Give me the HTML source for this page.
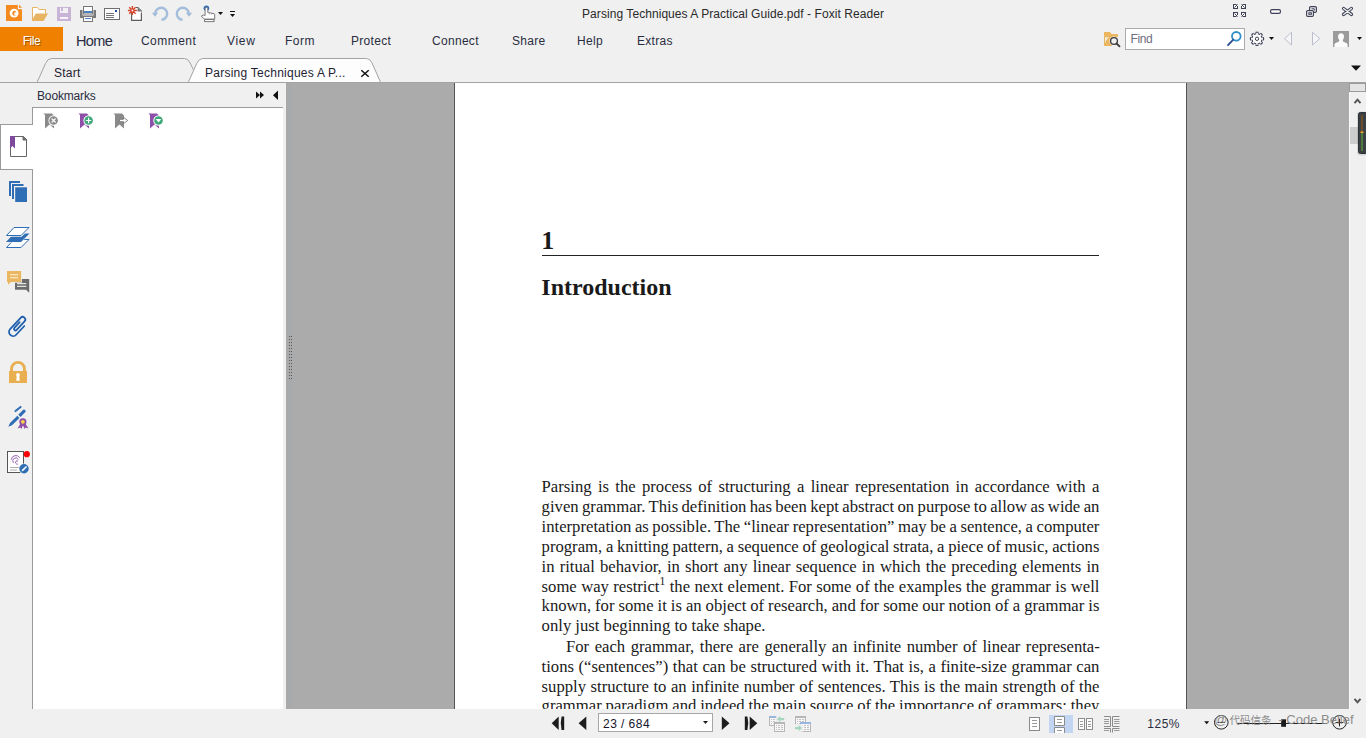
<!DOCTYPE html>
<html lang="en">
<head>
<meta charset="utf-8">
<title>Parsing Techniques A Practical Guide.pdf - Foxit Reader</title>
<style>
*{box-sizing:border-box;margin:0;padding:0}
html,body{width:1366px;height:738px;overflow:hidden;background:#f0f0f0}
body{position:relative;font-family:"Liberation Sans","Noto Sans CJK SC",sans-serif;font-size:12px;color:#1e1e2e}
.abs{position:absolute}
svg{position:absolute;overflow:visible}
/* title bar */
#title{position:absolute;left:0;top:5.600px;width:1466px;text-align:center;font-size:12px;line-height:16px;color:#2a2a2a;white-space:nowrap;letter-spacing:.06px}
/* menu */
#file{position:absolute;left:0;top:27px;width:63px;height:24px;background:#f08000;color:#fff;font-size:12px;line-height:29px;text-align:center;letter-spacing:-.4px;text-shadow:1px 1px 0 rgba(60,30,0,.45)}
.menu{position:absolute;top:33px;font-size:12px;line-height:16px;color:#2a2d40;white-space:nowrap;letter-spacing:.3px}
.menu.home{top:32px;font-size:14.5px;line-height:18px;letter-spacing:-.650px}
/* tabs */
#tabline{position:absolute;left:0;top:82px;width:1366px;height:1px;background:#a3a3a3}
.tabtxt{position:absolute;z-index:3;top:65px;font-size:12px;line-height:16px;color:#1e2233;white-space:nowrap;letter-spacing:.25px}
/* left panel */
#bmtitle{position:absolute;left:37px;top:88px;font-size:12px;line-height:16px;color:#2a2d40;letter-spacing:-.15px}
#panel{position:absolute;left:32px;top:107px;width:251px;height:602px;background:#fff;border-left:1px solid #9a9a9a;border-top:1px solid #9a9a9a}
#acttab{position:absolute;left:0;top:124px;width:33px;height:46px;background:#fff;border-top:1px solid #9a9a9a;border-bottom:1px solid #9a9a9a;border-left:1px solid #9a9a9a}
/* doc area */
#doc{position:absolute;left:286px;top:83px;width:1063px;height:626px;background:#ababab;overflow:hidden}
#docl{position:absolute;left:0;top:0;width:6px;height:626px;background:#a8a9aa}
#page{position:absolute;left:168px;top:0;width:733px;height:640px;background:#fff;border-left:1px solid #555;border-right:1px solid #555}
#page .t{position:absolute;left:86.600px;width:556.5px;font-family:"Liberation Serif",serif;font-size:16.67px;line-height:20px;color:#1a1a1a;white-space:nowrap}
#page .h{position:absolute;left:87px;font-family:"Liberation Serif",serif;font-weight:bold;font-size:24px;line-height:28px;color:#1a1a1a;white-space:nowrap}
#rule{position:absolute;left:87px;top:172px;width:557px;height:1px;background:#222}
sup.fn{font-size:11.670px;line-height:0;vertical-align:6.600px;position:relative}
/* scrollbar */
#vs{position:absolute;left:1349px;top:83px;width:17px;height:626px;background:#f0f0f0;border-left:1px solid #f9f9f9}
/* status */
#pgbox{position:absolute;left:598px;top:713px;width:115px;height:19px;background:#fff;border:1px solid #a6a6a6;font-size:12px;line-height:21px;padding-left:4px;color:#15152a;letter-spacing:.55px;word-spacing:-.3px}
#zoomtxt{position:absolute;left:1147.300px;top:716px;font-size:12px;line-height:16px;color:#2a2d40;letter-spacing:.5px}
#wm{position:absolute;z-index:3;left:1214.300px;top:711.500px;font-size:13px;line-height:16px;color:#858585;white-space:nowrap;opacity:.92}
#wm .cj{font-size:10.500px;margin-left:1.900px;margin-right:3.400px}
#find{position:absolute;left:1125px;top:28px;width:120px;height:22px;background:#fff;border:1px solid #ababab;font-size:12px;line-height:21px;padding-left:4.500px;color:#6d6d80;letter-spacing:-.4px}
</style>
</head>
<body>
<!-- TITLE BAR -->
<div id="title">Parsing Techniques A Practical Guide.pdf - Foxit Reader</div>

<!-- MENU -->
<div id="file">File</div>
<div class="menu home" style="left:76px">Home</div>
<div class="menu" style="left:141px;letter-spacing:.45px">Comment</div>
<div class="menu" style="left:227px;letter-spacing:.7px">View</div>
<div class="menu" style="left:285px;letter-spacing:.5px">Form</div>
<div class="menu" style="left:351px">Protect</div>
<div class="menu" style="left:432px">Connect</div>
<div class="menu" style="left:512px">Share</div>
<div class="menu" style="left:577px">Help</div>
<div class="menu" style="left:637px">Extras</div>
<div id="find">Find</div>


<!-- ICON OVERLAY: quick access toolbar -->
<svg id="qa" width="1366" height="58" style="left:0;top:0" viewBox="0 0 1366 58">
 <!-- foxit logo -->
 <path d="M6 5H17.800V9.200H22V21H6Z" fill="#f58a1f"/>
 <path d="M19 4.700L22 7.700H19Z" fill="#f58a1f"/>
 <circle cx="14.100" cy="13.100" r="4.450" fill="#fff"/>
 <ellipse cx="14.600" cy="13.300" rx="2.300" ry="2.500" fill="#f58a1f"/>
 <ellipse cx="15.800" cy="13.900" rx="1.700" ry="1.600" fill="#fff"/>
 <path d="M15 12.800L17.600 10.200L16.600 13Z" fill="#fff"/>
 <!-- open folder -->
 <path d="M32.5 7.5H37.5L39 9.5H45.5V13.5" fill="#fff" stroke="#e8b462" stroke-width="1"/>
 <path d="M32.5 7.5V20.5" stroke="#e8b462" stroke-width="1" fill="none"/>
 <path d="M33 8H37.3L38.8 10H45V14H36L33 19.5Z" fill="#fff"/>
 <path d="M35.8 13.5H48L43.6 21H32V20Z" fill="#e8b462"/>
 <!-- save -->
 <rect x="57" y="7" width="14" height="14" fill="#c8b4d6"/>
 <rect x="60" y="8" width="8" height="5" fill="#f2f0f3"/>
 <rect x="61" y="8" width="2" height="3" fill="#c8b4d6"/>
 <rect x="60" y="17" width="8" height="2" fill="#f6f4f7"/>
 <!-- printer -->
 <path d="M80 10H82.5V15.5H93.5V10H96V18H80Z" fill="#7a7a7a"/>
 <rect x="83.5" y="6.5" width="9" height="7.5" fill="#fff" stroke="#777" stroke-width="1"/>
 <rect x="84" y="11" width="8" height="2" fill="#4a80c2"/>
 <rect x="83.5" y="16.5" width="9" height="5" fill="#fff" stroke="#777" stroke-width="1"/>
 <rect x="85" y="18" width="6" height="1" fill="#4a80c2"/>
 <!-- mail -->
 <rect x="104.5" y="8.5" width="15" height="11" fill="#fff" stroke="#6e6e6e" stroke-width="1"/>
 <rect x="115" y="10" width="2" height="2" fill="#1e4fa0"/>
 <path d="M106 13.5H114M106 15.5H114M106 17.5H114" stroke="#777" stroke-width="1"/>
 <!-- new doc -->
 <path d="M131.600 13V20.400H141.400V11L137.800 7.600H136" fill="#fff" stroke="#606060" stroke-width="1.200"/>
 <path d="M131.5 13V8H137.800L141.500 11V13Z" fill="#fff"/>
 <path d="M137.500 7.500L141.500 11V11.500H137.500Z" fill="#777"/>
 <path d="M132.400 6V15M127.900 10.500H136.900M129.200 7.300L135.600 13.700M135.600 7.300L129.200 13.700" stroke="#d4442a" stroke-width="1.400"/>
 <circle cx="132.400" cy="10.500" r="0.900" fill="#fff"/>
 <!-- undo -->
 <path d="M155.200 13.500A6 6 0 1 1 161.500 19.800" fill="none" stroke="#a3bddb" stroke-width="2.400"/>
 <path d="M151.800 12.800H158.200L155 16.800Z" fill="#a3bddb"/>
 <!-- redo -->
 <path d="M188.800 13.500A6 6 0 1 0 182.500 19.800" fill="none" stroke="#a3bddb" stroke-width="2.400"/>
 <path d="M185.800 12.800H192.200L189 16.800Z" fill="#a3bddb"/>
 <!-- hand -->
 <circle cx="206.400" cy="8.200" r="2.800" fill="#2f6db5"/>
 <path d="M205.100 8.800V15.600L203.600 14.900L201.300 16.200L204.600 19.100H214.700V14.600Q214.700 13.500 213 13.500L212 13.300L210.500 12.900L209 12.800L207.800 12.600V8.800A1.350 1.350 0 0 0 205.100 8.800Z" fill="#fff" stroke="#777" stroke-width="1" stroke-linejoin="round"/>
 <path d="M209.500 13.200V14.600M211.500 13.500V14.800" stroke="#999" stroke-width="0.600"/>
 <rect x="204.600" y="19.500" width="9.400" height="2.100" fill="#fff" stroke="#777" stroke-width="1"/>
 <path d="M218 12H223L220.500 15Z" fill="#111"/>
 <rect x="230" y="11" width="5" height="1" fill="#111"/>
 <path d="M230 14H235L232.500 17Z" fill="#111"/>
 <!-- window controls -->
 <g fill="#fff" stroke="#3f4257" stroke-width="1">
  <rect x="1233.500" y="4.500" width="4" height="4"/><rect x="1241.500" y="4.500" width="4" height="4"/>
  <rect x="1233.500" y="12.500" width="4" height="4"/><rect x="1241.500" y="12.500" width="4" height="4"/>
 </g>
 <g fill="none" stroke="#f0f0f0" stroke-width="1.200">
  <path d="M1236.500 4.500H1238M1237.500 4V6M1241 4.500H1242.500M1241.500 4V6M1236.500 16.500H1238M1237.500 17V15M1241 16.500H1242.500M1241.500 17V15"/>
 </g>
 <g fill="none" stroke="#3f4257" stroke-width="1">
  <path d="M1234.500 7.500L1237.500 4.500M1244.500 7.500L1241.500 4.500M1234.500 13.500L1237.500 16.500M1244.500 13.500L1241.500 16.500"/>
  <rect x="1270.600" y="9.600" width="9.800" height="3.800" rx="1.300" fill="#fafafa" stroke-width="1.200"/>
  <path d="M1309.600 10V7.800A1.200 1.200 0 0 1 1310.800 6.600H1315.200A1.200 1.200 0 0 1 1316.400 7.800V11.100A1.200 1.200 0 0 1 1315.200 12.300H1314" stroke-width="1.200"/>
  <path d="M1311.500 8.800H1314.300V10.600"/>
  <rect x="1306.600" y="10.600" width="6.800" height="5.800" rx="1.200" fill="#fafafa" stroke-width="1.200"/>
  <rect x="1308.800" y="12.800" width="2.600" height="1.500"/>
 </g>
 <path d="M1343.600 8.500L1351.400 14.400M1351.400 8.500L1343.600 14.400" stroke="#3f4257" stroke-width="3.400" stroke-linecap="round"/>
 <path d="M1343.600 8.500L1351.400 14.400M1351.400 8.500L1343.600 14.400" stroke="#f6f6f6" stroke-width="1.300" stroke-linecap="round"/>
 <!-- folder search -->
 <path d="M1104 32H1110L1111.500 34H1118V37H1112V46H1104Z" fill="#eab65f"/>
 <path d="M1105 37.300H1109.500C1107.300 38 1106.300 40.500 1105 43.500Z" fill="#f4ead8"/>
 <circle cx="1114" cy="41" r="4.600" fill="#f0f0f0"/>
 <path d="M1116.300 43.300L1119.600 46.400" stroke="#f0f0f0" stroke-width="3.400" stroke-linecap="round"/>
 <circle cx="1114" cy="41" r="3.400" fill="#efefef" stroke="#3a3a3a" stroke-width="1.300"/>
 <path d="M1116.500 43.500L1119.500 46.300" stroke="#3a3a3a" stroke-width="1.800" stroke-linecap="round"/>
 <!-- find magnifier -->
 <circle cx="1236.300" cy="36.300" r="4.300" fill="#fff" stroke="#2f8fc7" stroke-width="1.800"/>
 <path d="M1233 39.800L1228 45.200" stroke="#2a4d8f" stroke-width="1.800" stroke-linecap="round"/>
 <!-- gear -->
 <g transform="translate(1257 38.800)">
  <path d="M6.90 0.00L6.80 0.36L6.53 0.69L6.13 0.97L5.67 1.20L5.22 1.40L4.84 1.57L4.59 1.76L4.50 2.00L4.54 2.31L4.68 2.70L4.86 3.16L5.02 3.65L5.11 4.13L5.06 4.56L4.88 4.88L4.56 5.06L4.13 5.11L3.65 5.02L3.16 4.86L2.70 4.68L2.31 4.54L2.00 4.50L1.76 4.59L1.57 4.84L1.40 5.22L1.20 5.67L0.97 6.13L0.69 6.53L0.36 6.80L0.00 6.90L-0.36 6.80L-0.69 6.53L-0.97 6.13L-1.20 5.67L-1.40 5.22L-1.57 4.84L-1.76 4.59L-2.00 4.50L-2.31 4.54L-2.70 4.68L-3.16 4.86L-3.65 5.02L-4.13 5.11L-4.56 5.06L-4.88 4.88L-5.06 4.56L-5.11 4.13L-5.02 3.65L-4.86 3.16L-4.68 2.70L-4.54 2.31L-4.50 2.00L-4.59 1.76L-4.84 1.57L-5.22 1.40L-5.67 1.20L-6.13 0.97L-6.53 0.69L-6.80 0.36L-6.90 0.00L-6.80 -0.36L-6.53 -0.69L-6.13 -0.97L-5.67 -1.20L-5.22 -1.40L-4.84 -1.57L-4.59 -1.76L-4.50 -2.00L-4.54 -2.31L-4.68 -2.70L-4.86 -3.16L-5.02 -3.65L-5.11 -4.13L-5.06 -4.56L-4.88 -4.88L-4.56 -5.06L-4.13 -5.11L-3.65 -5.02L-3.16 -4.86L-2.70 -4.68L-2.31 -4.54L-2.00 -4.50L-1.76 -4.59L-1.57 -4.84L-1.40 -5.22L-1.20 -5.67L-0.97 -6.13L-0.69 -6.53L-0.36 -6.80L-0.00 -6.90L0.36 -6.80L0.69 -6.53L0.97 -6.13L1.20 -5.67L1.40 -5.22L1.57 -4.84L1.76 -4.59L2.00 -4.50L2.31 -4.54L2.70 -4.68L3.16 -4.86L3.65 -5.02L4.13 -5.11L4.56 -5.06L4.88 -4.88L5.06 -4.56L5.11 -4.13L5.02 -3.65L4.86 -3.16L4.68 -2.70L4.54 -2.31L4.50 -2.00L4.59 -1.76L4.84 -1.57L5.22 -1.40L5.67 -1.20L6.13 -0.97L6.53 -0.69L6.80 -0.36Z" fill="#fff" stroke="#3f4257" stroke-width="0.500" stroke-opacity="0.550"/>
  <path d="M6.50 -1.15A6.6 6.6 0 0 1 6.50 1.15M5.41 3.79A6.6 6.6 0 0 1 3.79 5.41M1.15 6.50A6.6 6.6 0 0 1 -1.15 6.50M-3.79 5.41A6.6 6.6 0 0 1 -5.41 3.79M-6.50 1.15A6.6 6.6 0 0 1 -6.50 -1.15M-5.41 -3.79A6.6 6.6 0 0 1 -3.79 -5.41M-1.15 -6.50A6.6 6.6 0 0 1 1.15 -6.50M3.79 -5.41A6.6 6.6 0 0 1 5.41 -3.79M4.96 1.19A5.1 5.1 0 0 1 4.35 2.66M2.66 4.35A5.1 5.1 0 0 1 1.19 4.96M-1.19 4.96A5.1 5.1 0 0 1 -2.66 4.35M-4.35 2.66A5.1 5.1 0 0 1 -4.96 1.19M-4.96 -1.19A5.1 5.1 0 0 1 -4.35 -2.66M-2.66 -4.35A5.1 5.1 0 0 1 -1.19 -4.96M1.19 -4.96A5.1 5.1 0 0 1 2.66 -4.35M4.35 -2.66A5.1 5.1 0 0 1 4.96 -1.19" fill="none" stroke="#3f4257" stroke-width="1.100" stroke-linecap="round"/>
  <circle r="1.700" fill="#fff" stroke="#3f4257" stroke-width="1"/>
 </g>
 <path d="M1269 37H1274L1271.500 40Z" fill="#111"/>
 <path d="M1291.500 32.300V45L1284.500 38.600Z" fill="#f6f6f8" stroke="#b4b8ca" stroke-width="0.900" stroke-linejoin="round"/>
 <path d="M1312.500 32.300V45L1319.800 38.600Z" fill="#f6f6f8" stroke="#b4b8ca" stroke-width="0.900" stroke-linejoin="round"/>
 <!-- avatar -->
 <rect x="1333" y="31" width="16" height="16" fill="#9b9b9b"/>
 <path d="M1341 33.300C1343 33.300 1344 34.800 1344 36.600C1344 38.200 1343.300 39.300 1342.800 39.900V41.300C1343.500 42.300 1347.200 42.800 1347.600 44.500V47H1334.400V44.500C1334.800 42.800 1338.500 42.300 1339.200 41.300V39.900C1338.700 39.300 1338 38.200 1338 36.600C1338 34.800 1339 33.300 1341 33.300Z" fill="#fbfbfb"/>
 <path d="M1357 37H1362L1359.500 40Z" fill="#111"/>
</svg>

<!-- TABS -->
<div id="tabline"></div>
<div class="tabtxt" style="left:54px">Start</div>
<div class="tabtxt" style="left:205px">Parsing Techniques A P...</div>


<svg id="tabs" width="1366" height="30" style="left:0;top:56px" viewBox="0 56 1366 30">
 <!-- start tab -->
 <path d="M37 82.500L45.500 63.500Q47.500 58.500 51.500 58.500H184.500Q188 58.500 190.200 63L193.300 69.600" fill="none" stroke="#a3a3a3" stroke-width="1"/>
 <!-- active tab -->
 <path d="M188.200 82.500L196.700 63.500Q198.800 58.500 202.800 58.500H366.500Q370 58.500 372 63L380.700 82.500Z" fill="#fdfdfd" stroke="#a3a3a3" stroke-width="1"/>
 <path d="M361.300 70.300L368.700 76.700M368.700 70.300L361.300 76.700" stroke="#111" stroke-width="1.500"/>
 <path d="M1351 65.500H1361L1356 70.800Z" fill="#111"/>
</svg>

<!-- LEFT PANEL -->
<div id="bmtitle">Bookmarks</div>
<div id="panel"></div>
<div id="acttab"></div>


<svg id="lefticons" width="290" height="630" style="left:0;top:83px" viewBox="0 83 290 630">
 <!-- panel header arrows -->
 <path d="M256 91.500V98.500L260 95ZM260 91.500V98.500L264 95Z" fill="#111"/>
 <path d="M278 90.500V100L273 95.200Z" fill="#111"/>
 <!-- bookmark toolbar -->
 <g id="bm1">
  <path d="M43.500 113.500H52L54 115.500V128.500L49.500 124.500L45 128.500V115Z" fill="#8a8a8a"/>
  <circle cx="53.600" cy="120.500" r="5.200" fill="#fff"/>
  <circle cx="53.600" cy="120.500" r="4.300" fill="#8a8a8a"/>
  <path d="M51.600 118.500L55.600 122.500M55.600 118.500L51.600 122.500" stroke="#fff" stroke-width="1.100"/>
 </g>
 <g id="bm2">
  <path d="M78.500 113.500H87L89 115.500V128.500L84.500 124.500L80 128.500V115Z" fill="#8e4fa8"/>
  <circle cx="88.600" cy="120.500" r="5.200" fill="#fff"/>
  <circle cx="88.600" cy="120.500" r="4.300" fill="#3fa87a"/>
  <path d="M85.900 120.500H91.300M88.600 117.800V123.200" stroke="#fff" stroke-width="1.200"/>
 </g>
 <g id="bm3">
  <path d="M113.500 113.500H122L124 115.500V128.500L119.500 124.500L115 128.500V115Z" fill="#8a8a8a"/>
  <path d="M119.500 119.300H123.500V117.300L127.700 120.500L123.500 123.700V121.700H119.500Z" fill="#fff" stroke="#777" stroke-width="0.900" stroke-linejoin="round"/>
 </g>
 <g id="bm4">
  <path d="M148.500 113.500H157L159 115.500V128.500L154.500 124.500L150 128.500V115Z" fill="#8e4fa8"/>
  <circle cx="158.500" cy="120.500" r="5.200" fill="#fff"/>
  <circle cx="158.500" cy="120.500" r="4.300" fill="#3fa87a"/>
  <path d="M155.700 119H161.300L158.500 122.600Z" fill="#fff"/>
 </g>
 <!-- bookmark tab icon -->
 <path d="M10.500 136.500H23.500L26.500 139.500V156.500H10.500Z" fill="#fff" stroke="#666" stroke-width="1"/>
 <path d="M23 136.500V140H26.500Z" fill="#777" stroke="#666" stroke-width="1" stroke-linejoin="round"/>
 <path d="M10 136H15V148.500L12.500 146L10 148.500Z" fill="#7f4a9c"/>
 <!-- pages -->
 <rect x="9" y="181" width="11" height="15" fill="#2f6db5"/>
 <rect x="11" y="183" width="13" height="16" fill="#f0f0f0"/>
 <rect x="12" y="184" width="11.500" height="15" fill="#2f6db5"/>
 <rect x="14" y="186" width="13" height="16" fill="#f0f0f0"/>
 <rect x="15.200" y="187.300" width="11.800" height="14.700" fill="#2f6db5"/>
 <!-- layers -->
 <path d="M14 239.500H29L21 247.500H6.500Z" fill="#fff" stroke="#2f6db5" stroke-width="1" stroke-linejoin="round"/>
 <path d="M14 233.500H29.500L21 242H6Z" fill="#2f6db5" stroke="#f0f0f0" stroke-width="1.200"/>
 <path d="M14 233.500H29.500L21 242H6Z" fill="#2f6db5"/>
 <path d="M14 227.500H29L21 235.500H6.500Z" fill="#fff" stroke="#f0f0f0" stroke-width="2.600" stroke-linejoin="round"/>
 <path d="M14 227.500H29L21 235.500H6.500Z" fill="#fff" stroke="#2f6db5" stroke-width="1" stroke-linejoin="round"/>
 <!-- comments -->
 <path d="M15 279H29.200V292.800L26 289.700H15Z" fill="#6b6b6b"/>
 <path d="M17 283.600H26.300M17 286.400H26.300" stroke="#e4e4e4" stroke-width="1.100"/>
 <path d="M7 271H21.100V282H11L8 284.800V282H7Z" fill="#eab65f" stroke="#f0f0f0" stroke-width="1.600"/>
 <path d="M7 271H21.100V282H11L8 284.800V282H7Z" fill="#eab65f"/>
 <path d="M10 274.700H18.300M10 277.700H18.300" stroke="#fdf3dd" stroke-width="1.100"/>
 <!-- paperclip -->
 <g transform="translate(17.900 326.800) rotate(-47) scale(1.050)" fill="none" stroke="#1f5fae" stroke-width="1.650" stroke-linecap="round">
  <path d="M4.700 3.950L-6.650 3.950A3.950 3.950 0 0 1 -6.650 -3.950L8.050 -3.950A2.550 2.550 0 0 1 8.050 1.150L-3 1.150A1.450 1.450 0 0 1 -3 -1.750L4.400 -1.750"/>
 </g>
 <!-- lock -->
 <path d="M11.550 372V368.800A6.450 6.450 0 0 1 24.450 368.800V372" fill="none" stroke="#e8ae4f" stroke-width="2.900"/>
 <rect x="9" y="371" width="18" height="12" fill="#e8ae4f"/>
 <circle cx="18" cy="375" r="1.900" fill="#fff"/>
 <path d="M16.900 375.500H19.100L19.800 380.800H16.200Z" fill="#fff"/>
 <!-- pen & award -->
 <path d="M8.300 426.700L10 423L17.300 415.800L19.500 418L12 425.200Z" fill="#2f6db5"/>
 <path d="M18.300 414.800L23.200 409.800A1.600 1.600 0 0 1 25.400 412L20.500 417Z" fill="#2f6db5"/>
 <path d="M15.500 411.100L20.600 406.900" stroke="#2f6db5" stroke-width="2" stroke-linecap="round"/>
 <path d="M20.500 423.500L17.500 428.500L20.300 427.500L21.500 429L23 425L24.500 429L25.700 427.500L28.500 428.500L25.300 423.500Z" fill="#8e4fa8"/>
 <circle cx="22.900" cy="421.800" r="3.600" fill="#8e4fa8"/>
 <circle cx="22.900" cy="421.800" r="1.900" fill="#f6d44a"/>
 <!-- sign doc -->
 <rect x="7.500" y="451.500" width="16" height="21" fill="#fff" stroke="#555" stroke-width="1"/>
 <g fill="none" stroke="#8e4fa8" stroke-width="0.900" stroke-linecap="round">
  <path d="M11.300 459.300A4.600 4.600 0 0 1 19.600 457.500"/>
  <path d="M13.200 462.500A3 3 0 0 1 18.300 459.300"/>
  <path d="M17.500 464.200A1.800 1.800 0 0 1 16 461.200A1.300 1.300 0 0 1 17.600 461"/>
 </g>
 <path d="M10 467.500H19M10 470H17" stroke="#999" stroke-width="0.800"/>
 <circle cx="26.800" cy="454.200" r="3.100" fill="#f00"/>
 <circle cx="24" cy="468.800" r="5.300" fill="#f0f0f0"/>
 <circle cx="24" cy="468.800" r="4.700" fill="#2f6db5"/>
 <path d="M21.500 471.500L22.300 469.500L26 466L27 467L23.400 470.700Z" fill="#fff"/>
 </svg>

<!-- DOC -->
<div id="doc">
 <div id="docl"></div>
 <div id="page">
  <div class="h" style="top:143.500px;font-size:26px;left:86.300px">1</div>
  <div id="rule"></div>
  <div class="h" style="top:190px;left:86.300px">Introduction</div>
  <div class="t" style="top:394px;word-spacing:2.159px">Parsing is the process of structuring a linear representation in accordance with a</div>
  <div class="t" style="top:414px;word-spacing:-0.742px">given grammar. This definition has been kept abstract on purpose to allow as wide an</div>
  <div class="t" style="top:434px;word-spacing:-0.599px">interpretation as possible. The “linear representation” may be a sentence, a computer</div>
  <div class="t" style="top:454px;word-spacing:-0.462px">program, a knitting pattern, a sequence of geological strata, a piece of music, actions</div>
  <div class="t" style="top:474px;word-spacing:0.976px">in ritual behavior, in short any linear sequence in which the preceding elements in</div>
  <div class="t" style="top:494px;word-spacing:0.214px">some way restrict<sup class="fn">1</sup> the next element. For some of the examples the grammar is well</div>
  <div class="t" style="top:513px;word-spacing:-0.193px">known, for some it is an object of research, and for some our notion of a grammar is</div>
  <div class="t l" style="top:533px">only just beginning to take shape.</div>
  <div class="t" style="top:554px;left:111px;width:533px;word-spacing:1.335px">For each grammar, there are generally an infinite number of linear representa-</div>
  <div class="t" style="top:574px;word-spacing:0.416px">tions (“sentences”) that can be structured with it. That is, a finite-size grammar can</div>
  <div class="t" style="top:594px;word-spacing:0.380px">supply structure to an infinite number of sentences. This is the main strength of the</div>
  <div class="t" style="top:613px;word-spacing:-0.307px">grammar paradigm and indeed the main source of the importance of grammars: they</div>
 </div>
</div>
<svg id="dots" width="6" height="50" style="left:288px;top:334px;z-index:4" viewBox="288 334 6 50">
<!-- splitter dots -->
 <g fill="#5a5a5a">
  <path d="M289 336h1v1h-1zM291 336h1v1h-1zM289 339h1v1h-1zM291 339h1v1h-1zM289 342h1v1h-1zM291 342h1v1h-1zM289 345h1v1h-1zM291 345h1v1h-1zM289 348h1v1h-1zM291 348h1v1h-1zM289 351h1v1h-1zM291 351h1v1h-1zM289 354h1v1h-1zM291 354h1v1h-1zM289 357h1v1h-1zM291 357h1v1h-1zM289 360h1v1h-1zM291 360h1v1h-1zM289 363h1v1h-1zM291 363h1v1h-1zM289 366h1v1h-1zM291 366h1v1h-1zM289 369h1v1h-1zM291 369h1v1h-1zM289 372h1v1h-1zM291 372h1v1h-1zM289 375h1v1h-1zM291 375h1v1h-1zM289 378h1v1h-1zM291 378h1v1h-1z"/>
 </g>
</svg>
<div id="vs"></div>
<svg id="vsicons" width="17" height="626" style="left:1349px;top:83px" viewBox="1349 83 17 626">
 <rect x="1349.500" y="83.500" width="16" height="8" fill="#e4e4e4" stroke="#9a9a9a"/>
 <path d="M1354.500 103.200L1357.500 99.700L1360.500 103.200" fill="none" stroke="#555" stroke-width="2"/>
 <rect x="1350" y="127" width="15" height="17" fill="#cdcdcd"/>
 <rect x="1357" y="111.500" width="10" height="44" rx="3" fill="#000" opacity="0.100"/>
 <rect x="1358.500" y="112.500" width="9" height="41" rx="2" fill="#3b4045" stroke="#2c3034"/>
 <rect x="1361" y="115" width="2" height="17" fill="#6b4e2a"/>
 <rect x="1361" y="133" width="2" height="18" fill="#4f7a3a"/>
 <rect x="1360.500" y="131.500" width="3" height="1.500" fill="#f5a623"/>
 <path d="M1354.500 698.800L1357.500 702.300L1360.500 698.800" fill="none" stroke="#555" stroke-width="2"/>
</svg>


<!-- STATUS BAR -->
<svg id="status" width="1366" height="29" style="left:0;top:709px;z-index:2" viewBox="0 709 1366 29">
 <!-- nav -->
 <g fill="#1c1c1c">
  <path d="M558.700 716.500V730L551.700 723.200Z"/>
  <path d="M561.600 716.500H564.200V730H561.600Q559.800 723.200 561.600 716.500Z"/>
  <path d="M586.300 716.500V730L578.600 723.200Z"/>
  <path d="M721.800 716.500V730L729.500 723.200Z"/>
  <path d="M747.400 716.500H744.800V730H747.400Q749.200 723.200 747.400 716.500Z"/>
  <path d="M749.700 716.500V730L757.300 723.200Z"/>
  <path d="M703 721H708L705.500 724Z"/>
 </g>
 <!-- page layout transition icons (disabled) -->
 <g>
  <rect x="769.500" y="716.500" width="10" height="9" fill="#f6f6f6" stroke="#b6b6b6"/>
  <rect x="769" y="716" width="11" height="2" fill="#9bb6dd"/>
  <path d="M771 719.5h1M773 719.5h2M776 719.5h2M771 721.5h1M773 721.5h2M776 721.5h2M771 723.5h1M773 723.5h2M776 723.5h2" stroke="#c2c2c2" stroke-width="1"/>
  <rect x="776.300" y="715" width="9" height="7.500" fill="#f0f0f0"/>
  <path d="M784.200 718H780.300V716L777 719.100L780.300 722.200V720.200H784.200Z" fill="#a4d6bd"/>
  <rect x="774.500" y="722.500" width="10" height="9" fill="#f6f6f6" stroke="#b6b6b6"/>
  <rect x="774" y="722" width="11" height="2" fill="#b6b6b6"/>
  <path d="M776 725.5h1M778 725.5h2M781 725.5h2M776 727.5h1M778 727.5h2M781 727.5h2M776 729.5h1M778 729.5h2M781 729.5h2" stroke="#c2c2c2" stroke-width="1"/>
 </g>
 <g>
  <rect x="795.500" y="716.500" width="10" height="9" fill="#f6f6f6" stroke="#b6b6b6"/>
  <rect x="795" y="716" width="11" height="2" fill="#b6b6b6"/>
  <path d="M797 719.5h1M799 719.5h2M802 719.5h2M797 721.5h1M799 721.5h2M802 721.5h2M797 723.5h1M799 723.5h2M802 723.5h2" stroke="#c2c2c2" stroke-width="1"/>
  <rect x="800.500" y="722.500" width="10" height="9" fill="#f6f6f6" stroke="#b6b6b6"/>
  <rect x="800" y="722" width="11" height="2" fill="#9bb6dd"/>
  <path d="M802 725.5h1M804 725.5h2M807 725.5h2M802 727.5h1M804 727.5h2M807 727.5h2M802 729.5h1M804 729.5h2M807 729.5h2" stroke="#c2c2c2" stroke-width="1"/>
  <rect x="794.500" y="724.300" width="8.300" height="7.500" fill="#f0f0f0"/>
  <path d="M795 727H798.700V725L802 728.100L798.700 731.200V729.200H795Z" fill="#a4d6bd"/>
 </g>
 <!-- view mode icons -->
 <rect x="1029.500" y="717.500" width="10" height="13" fill="#fff" stroke="#8a8a8a"/>
 <path d="M1032 720.500H1037M1032 723.500H1037M1032 726.500H1037" stroke="#9a9a9a" stroke-width="1"/>
 <rect x="1049" y="715" width="24" height="18" fill="#c2d5f2"/>
 <path d="M1054.500 725.500V716.500H1064.500V725.500Z" fill="#fff" stroke="#8a8a8a"/>
 <path d="M1057 719.500H1062M1057 722.500H1062" stroke="#9a9a9a" stroke-width="1"/>
 <path d="M1054.500 733V727.500H1064.500V733" fill="#fff" stroke="#8a8a8a"/>
 <path d="M1057 730.500H1062" stroke="#9a9a9a" stroke-width="1"/>
 <rect x="1078.500" y="718.500" width="6" height="11" fill="#fff" stroke="#8a8a8a"/>
 <rect x="1086.500" y="718.500" width="6" height="11" fill="#fff" stroke="#8a8a8a"/>
 <path d="M1080 721.500H1083M1080 724.500H1083M1080 726.500H1083M1088 721.500H1091M1088 724.500H1091M1088 726.500H1091" stroke="#9a9a9a" stroke-width="1"/>
 <path d="M1104 716.500H1110.500V726.500H1104M1119.500 716.500H1112.500V726.500H1119.500M1104 728.500H1110.500V732.500M1119.500 728.500H1112.500V732.500" fill="none" stroke="#8a8a8a"/>
 <path d="M1104 719.500H1109M1104 721.500H1109M1104 723.500H1109M1114 719.500H1119.500M1114 721.500H1119.500M1114 723.500H1119.500M1104 730.500H1109M1114 730.500H1119.500" stroke="#9a9a9a" stroke-width="1"/>
 <path d="M1204.200 721.200H1209.200L1206.700 724.200Z" fill="#111"/>
 <!-- zoom slider -->
 <circle cx="1221.300" cy="722.300" r="6.800" fill="none" stroke="#222" stroke-width="1"/>
 <path d="M1217.500 722.500H1225" stroke="#222" stroke-width="1"/>
 <path d="M1237 723.500H1327" stroke="#222" stroke-width="1"/>
 <rect x="1281.200" y="719.300" width="4.800" height="7.500" fill="#1a1a1a"/>
 <circle cx="1339.500" cy="722.300" r="6.800" fill="none" stroke="#222" stroke-width="1"/>
 <path d="M1335.700 722.500H1343.300M1339.500 718.700V726.300" stroke="#222" stroke-width="1"/>
</svg>

<div id="pgbox">23 / 684</div>
<div id="zoomtxt">125%</div>
<div id="wm">@<span class="cj">代码信条</span> - Code Belief</div>
</body>
</html>
